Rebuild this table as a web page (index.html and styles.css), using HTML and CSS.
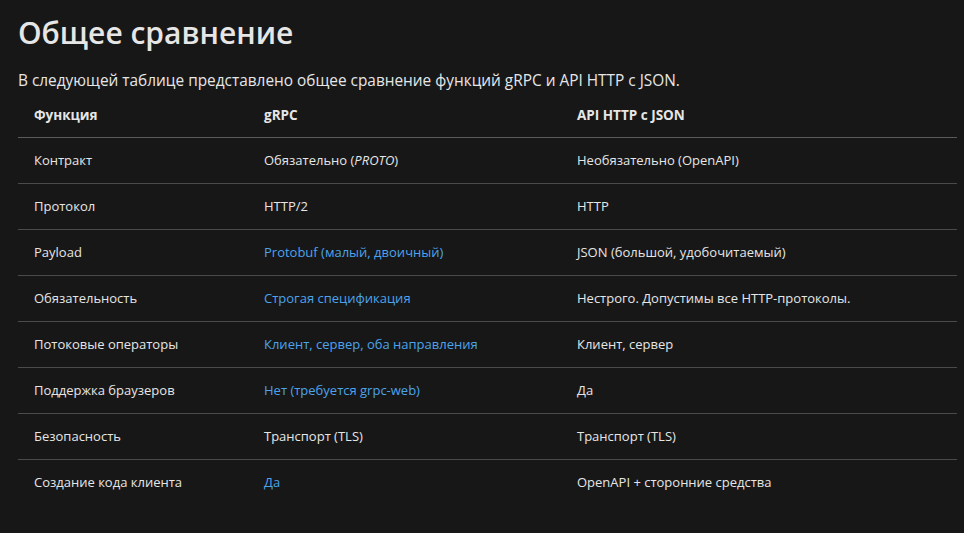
FILE: index.html
```html
<!DOCTYPE html>
<html lang="ru">
<head>
<meta charset="utf-8">
<link rel="stylesheet" href="styles.css">
</head>
<body>
<main class="content">
  <h2 class="title">Общее сравнение</h2>
  <p class="intro">В следующей таблице представлено общее сравнение функций gRPC и API HTTP с JSON.</p>
  <table class="cmp">
    <colgroup>
      <col class="c1"><col class="c2"><col class="c3">
    </colgroup>
    <thead>
      <tr><th>Функция</th><th>gRPC</th><th>API HTTP с JSON</th></tr>
    </thead>
    <tbody>
      <tr><td>Контракт</td><td>Обязательно (<em>PROTO</em>)</td><td>Необязательно (OpenAPI)</td></tr>
      <tr><td>Протокол</td><td>HTTP/2</td><td>HTTP</td></tr>
      <tr><td>Payload</td><td><a class="link" href="#">Protobuf (малый, двоичный)</a></td><td>JSON (большой, удобочитаемый)</td></tr>
      <tr><td>Обязательность</td><td><a class="link" href="#">Строгая спецификация</a></td><td>Нестрого. Допустимы все HTTP-протоколы.</td></tr>
      <tr><td>Потоковые операторы</td><td><a class="link" href="#">Клиент, сервер, оба направления</a></td><td>Клиент, сервер</td></tr>
      <tr><td>Поддержка браузеров</td><td><a class="link" href="#">Нет (требуется grpc-web)</a></td><td>Да</td></tr>
      <tr><td>Безопасность</td><td>Транспорт (TLS)</td><td>Транспорт (TLS)</td></tr>
      <tr><td>Создание кода клиента</td><td><a class="link" href="#">Да</a></td><td>OpenAPI + сторонние средства</td></tr>
    </tbody>
  </table>
</main>
</body>
</html>
```
FILE: styles.css
```css
html, body {
  margin: 0;
  padding: 0;
  background: #171717;
  color: #e6e6e6;
  font-family: "Open Sans", "Noto Sans", sans-serif;
}
.content {
  padding: 11px 7px 0 18px;
}
.title {
  margin: 0;
  font-size: 30px;
  line-height: 44px;
  font-weight: 600;
  color: #e6e6e6;
}
.intro {
  margin: 14px 0 0;
  font-size: 15.4px;
  line-height: 23px;
}
.cmp {
  width: 939px;
  border-collapse: collapse;
  table-layout: fixed;
  font-size: 13px;
}
.c1 { width: 230px; }
.c2 { width: 313px; }
.c3 { width: 396px; }
.cmp th, .cmp td {
  text-align: left;
  padding: 12px 16px;
  line-height: 21px;
  white-space: nowrap;
}
.cmp th {
  padding: 13px 16px 11px;
  font-size: 13.5px;
  font-weight: 700;
  border-bottom: 1px solid #5a5a5a;
}
.cmp tbody tr + tr td {
  border-top: 1px solid #4a4a4a;
}
.link {
  color: #4ca3ec;
  text-decoration: none;
}
```
